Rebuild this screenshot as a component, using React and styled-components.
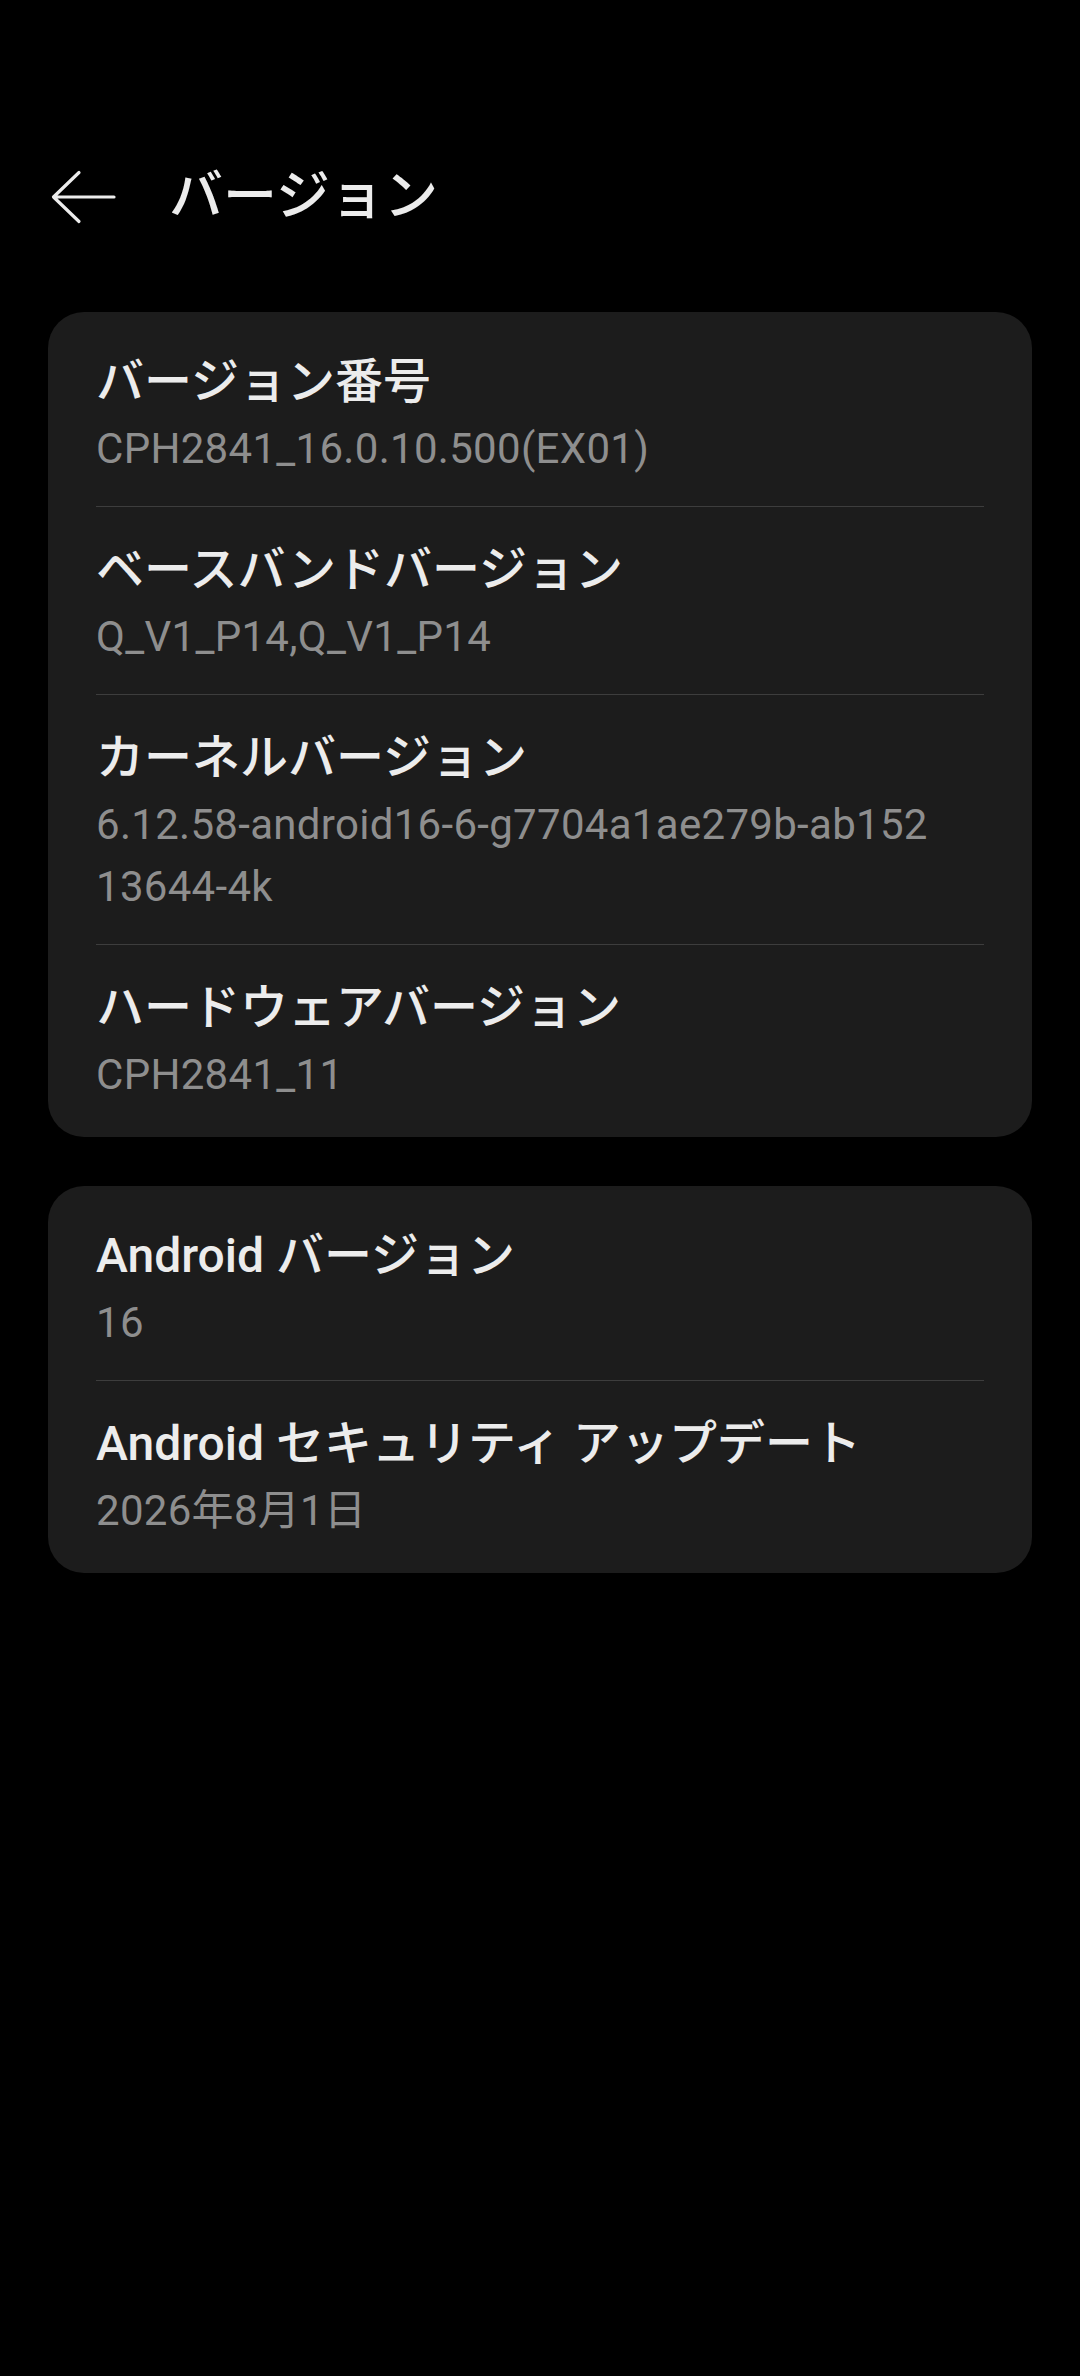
import React from "react";
import styled, { createGlobalStyle } from "styled-components";

const GlobalStyle = createGlobalStyle`
  html, body {
    margin: 0;
    padding: 0;
    background: #000;
  }
  body {
    font-family: Roboto, "Noto Sans CJK JP", "Noto Sans", sans-serif;
    -webkit-font-smoothing: antialiased;
  }
`;

const Page = styled.div`
  box-sizing: border-box;
  width: 1080px;
  min-height: 2376px;
  padding-top: 130px;
  background: #000;
  color: #ececec;
`;

const Toolbar = styled.header`
  display: flex;
  align-items: center;
  height: 134px;
  padding-left: 51px;
`;

const BackButton = styled.button`
  display: flex;
  align-items: center;
  justify-content: center;
  width: 66px;
  height: 54px;
  padding: 0;
  border: none;
  background: transparent;
  color: #ececec;
`;

const Title = styled.h1`
  margin: 0 0 0 52px;
  font-size: 54px;
  line-height: 64px;
  font-weight: 500;
  color: #ececec;
`;

const Content = styled.main`
  display: flex;
  flex-direction: column;
  gap: 49px;
  padding: 48px 48px;
`;

const Card = styled.section`
  background: #1c1c1c;
  border-radius: 36px;
  padding: 7px 0 5px;
`;

const Row = styled.div`
  padding: 31px 48px 26px;
`;

const RowTitle = styled.div`
  font-size: 48px;
  line-height: 64px;
  font-weight: 500;
  color: #ececec;
`;

const RowValue = styled.div`
  margin-top: 4px;
  font-size: 42px;
  line-height: 62px;
  letter-spacing: 0.3px;
  font-weight: 400;
  color: #8e8e8e;
`;

const Divider = styled.div`
  height: 1px;
  margin: 0 48px;
  background: #3d3d3d;
`;

const BackArrow = () => (
  <svg width="66" height="54" viewBox="0 0 66 54" fill="none">
    <path
      d="M63 27 H2.5 M28 2.5 L2.5 27 L28 51.5"
      stroke="currentColor"
      strokeWidth="3.2"
      strokeLinecap="round"
      strokeLinejoin="round"
    />
  </svg>
);

const groups = [
  [
    { title: "バージョン番号", value: ["CPH2841_16.0.10.500(EX01)"] },
    { title: "ベースバンドバージョン", value: ["Q_V1_P14,Q_V1_P14"] },
    {
      title: "カーネルバージョン",
      value: ["6.12.58-android16-6-g7704a1ae279b-ab152", "13644-4k"],
    },
    { title: "ハードウェアバージョン", value: ["CPH2841_11"] },
  ],
  [
    { title: "Android バージョン", value: ["16"] },
    { title: "Android セキュリティ アップデート", value: ["2026年8月1日"] },
  ],
];

export default function App() {
  return (
    <Page>
      <GlobalStyle />
      <Toolbar>
        <BackButton aria-label="戻る">
          <BackArrow />
        </BackButton>
        <Title>バージョン</Title>
      </Toolbar>
      <Content>
        {groups.map((items, gi) => (
          <Card key={gi}>
            {items.map((item, i) => (
              <React.Fragment key={item.title}>
                {i > 0 && <Divider />}
                <Row>
                  <RowTitle>{item.title}</RowTitle>
                  <RowValue>
                    {item.value.map((line, li) => (
                      <React.Fragment key={li}>
                        {li > 0 && <br />}
                        {line}
                      </React.Fragment>
                    ))}
                  </RowValue>
                </Row>
              </React.Fragment>
            ))}
          </Card>
        ))}
      </Content>
    </Page>
  );
}
